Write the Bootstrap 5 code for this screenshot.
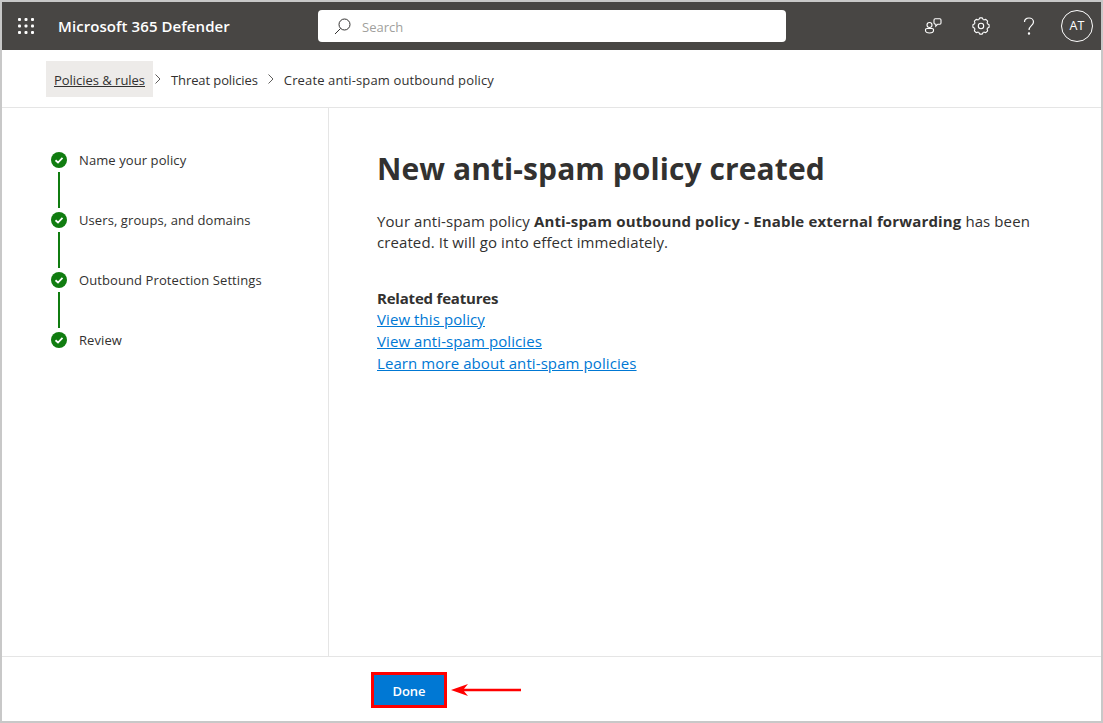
<!DOCTYPE html>
<html lang="en">
<head>
<meta charset="utf-8">
<title>Microsoft 365 Defender</title>
<link href="https://cdn.jsdelivr.net/npm/bootstrap@5.3.0/dist/css/bootstrap.min.css" rel="stylesheet">
<style>
html,body{height:100%;}
body{margin:0;background:#fff;color:#323130;font-family:"Open Sans","Noto Sans","Liberation Sans",sans-serif;font-size:13px;overflow:hidden;}
.shell{width:1103px;height:723px;border:2px solid #c8c8c8;}
.topbar{height:48px;background:#484644;color:#fff;}
.waffle{width:48px;margin-right:8px;}
.brandname{font-weight:600;font-size:15px;width:260px;letter-spacing:.08px;padding-top:1px;}
.searchbox{width:468px;height:32px;background:#fff;border-radius:4px;padding-left:16px;gap:11px;color:#a19f9d;}
.searchbox span{font-size:13px;padding-top:4px;}
.tbtn{width:48px;height:48px;}
.avatar{width:32px;height:32px;border:1px solid #fff;border-radius:50%;font-size:12.5px;margin:0 8px;}
.crumbbar{height:58px;border-bottom:1px solid #e5e5e5;padding:2px 0 0 44px;font-size:13px;}
.crumbcur{background:#edebe9;height:36px;padding:0 8px;color:#323130;}
.crumbtext{text-decoration:underline;letter-spacing:-.03px;padding-top:3px;}
.crumbsep{width:18px;padding-left:2px;}
.crumbmid{padding:3px 8px 0 0;letter-spacing:-.1px;}
.crumblast{padding-top:3px;letter-spacing:.13px;}
.mainarea{height:549px;}
.wizard{width:327px;border-right:1px solid #e5e5e5;padding:44px 0 0 49px;}
.stepline{width:2px;height:36px;background:#107c10;margin:4px 0 4px 7px;}
.steprow{height:16px;gap:12px;font-size:13px;letter-spacing:.09px;}
.steprow span{padding-top:1px;}
.contentpane{padding:41px 0 0 48px;font-size:15px;letter-spacing:.09px;}
.contentpane h1{font-size:30px;font-weight:700;color:#323130;margin:0 0 22px;line-height:40px;}
.lede{line-height:21px;width:670px;margin-bottom:35px;}
.lede b{letter-spacing:.15px;}
.relhead{font-weight:700;line-height:20px;letter-spacing:-.2px;}
.rellink{display:block;color:#0078d4;line-height:22px;text-decoration:underline;}
.footerbar{height:65px;border-top:1px solid #e5e5e5;padding:2px 0 0 369px;gap:4px;}
.donewrap{border:3px solid #f00;height:36px;width:76px;}
.donebtn{width:100%;height:100%;background:#0078d4;color:#fff;font-size:13px;font-weight:600;border:0;border-radius:0;padding:3px 0 0;}
.donebtn:hover{background:#0078d4;color:#fff;}
</style>
</head>
<body>
<div class="shell d-flex flex-column">
  <header class="topbar d-flex align-items-center">
    <div class="waffle d-flex justify-content-center align-items-center">
      <svg width="16" height="16" viewBox="0 0 16 16" fill="#fff"><rect x="0" y="0" width="3" height="3" rx="1"/><rect x="6.500" y="0" width="3" height="3" rx="1"/><rect x="13" y="0" width="3" height="3" rx="1"/><rect x="0" y="6.500" width="3" height="3" rx="1"/><rect x="6.500" y="6.500" width="3" height="3" rx="1"/><rect x="13" y="6.500" width="3" height="3" rx="1"/><rect x="0" y="13" width="3" height="3" rx="1"/><rect x="6.500" y="13" width="3" height="3" rx="1"/><rect x="13" y="13" width="3" height="3" rx="1"/></svg>
    </div>
    <div class="brandname">Microsoft 365 Defender</div>
    <div class="searchbox d-flex align-items-center">
      <svg width="17" height="17" viewBox="0 0 17 17" fill="none" stroke="#323130"><circle cx="10.500" cy="6.500" r="5.500"/><path d="M6.500 10.500 1 16"/></svg>
      <span>Search</span>
    </div>
    <div class="d-flex align-items-center ms-auto">
      <div class="tbtn d-flex align-items-center justify-content-center">
        <svg width="18" height="16" viewBox="0 0 18 16" fill="none" stroke="#fff" stroke-width="1.100"><circle cx="5.500" cy="7" r="2.500"/><path d="M1.500 11.500c0-.8.7-1 1.500-1h5c.8 0 1.500.2 1.500 1v1c0 1.500-1.500 2.500-4 2.500s-4-1-4-2.500z"/><path d="M10 2c0-.6.5-1.200 1.200-1.200h4.600c.7 0 1.200.6 1.200 1.200v3c0 .7-.5 1.200-1.200 1.200h-2l-2 2v-2c-1 0-1.800-.5-1.800-1.200z"/></svg>
      </div>
      <div class="tbtn d-flex align-items-center justify-content-center">
        <svg width="18" height="18" viewBox="0 0 18 18" fill="none" stroke="#fff" stroke-width="1.100" stroke-linejoin="round"><circle cx="9" cy="9" r="2.700"/><g transform="translate(9 9)"><path d="M-2.450-6-1.300-8.100H1.300L2.450-6"/><path transform="rotate(45)" d="M-2.450-6-1.300-8.100H1.300L2.450-6"/><path transform="rotate(90)" d="M-2.450-6-1.300-8.100H1.300L2.450-6"/><path transform="rotate(135)" d="M-2.450-6-1.300-8.100H1.300L2.450-6"/><path transform="rotate(180)" d="M-2.450-6-1.300-8.100H1.300L2.450-6"/><path transform="rotate(225)" d="M-2.450-6-1.300-8.100H1.300L2.450-6"/><path transform="rotate(270)" d="M-2.450-6-1.300-8.100H1.300L2.450-6"/><path transform="rotate(315)" d="M-2.450-6-1.300-8.100H1.300L2.450-6"/></g></svg>
      </div>
      <div class="tbtn d-flex align-items-center justify-content-center">
        <svg width="12" height="18" viewBox="0 0 12 18" fill="none" stroke="#fff" stroke-width="1.200"><path d="M1.500 5C1.500 2.500 3.500 1 6 1s4.500 1.700 4.500 4c0 3.500-4.500 3.800-4.500 8"/><circle cx="6" cy="16.500" r=".6" fill="#fff"/></svg>
      </div>
      <div class="avatar d-flex align-items-center justify-content-center">AT</div>
    </div>
  </header>

  <nav class="crumbbar d-flex align-items-center">
    <span class="crumbcur d-flex align-items-center"><span class="crumbtext">Policies &amp; rules</span></span>
    <span class="crumbsep d-flex"><svg width="6" height="10" viewBox="0 0 6 10" fill="none" stroke="#605e5c"><path d="M.5.500 5 5 .5 9.500"/></svg></span>
    <span class="crumbmid">Threat policies</span>
    <span class="crumbsep d-flex"><svg width="6" height="10" viewBox="0 0 6 10" fill="none" stroke="#605e5c"><path d="M.5.500 5 5 .5 9.500"/></svg></span>
    <span class="crumblast">Create anti-spam outbound policy</span>
  </nav>

  <div class="mainarea d-flex">
    <aside class="wizard flex-shrink-0">
      <div class="steprow d-flex align-items-center"><svg width="16" height="16" viewBox="0 0 16 16"><circle cx="8" cy="8" r="8" fill="#107c10"/><path d="M4.500 8.300 7 10.500 11.500 5.800" fill="none" stroke="#fff" stroke-width="1.800"/></svg><span>Name your policy</span></div>
      <div class="stepline"></div>
      <div class="steprow d-flex align-items-center"><svg width="16" height="16" viewBox="0 0 16 16"><circle cx="8" cy="8" r="8" fill="#107c10"/><path d="M4.500 8.300 7 10.500 11.500 5.800" fill="none" stroke="#fff" stroke-width="1.800"/></svg><span>Users, groups, and domains</span></div>
      <div class="stepline"></div>
      <div class="steprow d-flex align-items-center"><svg width="16" height="16" viewBox="0 0 16 16"><circle cx="8" cy="8" r="8" fill="#107c10"/><path d="M4.500 8.300 7 10.500 11.500 5.800" fill="none" stroke="#fff" stroke-width="1.800"/></svg><span>Outbound Protection Settings</span></div>
      <div class="stepline"></div>
      <div class="steprow d-flex align-items-center"><svg width="16" height="16" viewBox="0 0 16 16"><circle cx="8" cy="8" r="8" fill="#107c10"/><path d="M4.500 8.300 7 10.500 11.500 5.800" fill="none" stroke="#fff" stroke-width="1.800"/></svg><span>Review</span></div>
    </aside>
    <main class="contentpane flex-grow-1">
      <h1>New anti-spam policy created</h1>
      <div class="lede">Your anti-spam policy <b>Anti-spam outbound policy - Enable external forwarding</b> has been created. It will go into effect immediately.</div>
      <div class="relhead">Related features</div>
      <a class="rellink" href="#">View this policy</a>
      <a class="rellink" href="#">View anti-spam policies</a>
      <a class="rellink" href="#">Learn more about anti-spam policies</a>
    </main>
  </div>

  <footer class="footerbar d-flex align-items-center">
    <div class="donewrap"><button type="button" class="btn donebtn">Done</button></div>
    <svg width="70" height="12" viewBox="0 0 70 12"><path d="M0 6 17 0 13 4.800H70V7.200H13L17 12z" fill="#f00"/></svg>
  </footer>
</div>
</body>
</html>
